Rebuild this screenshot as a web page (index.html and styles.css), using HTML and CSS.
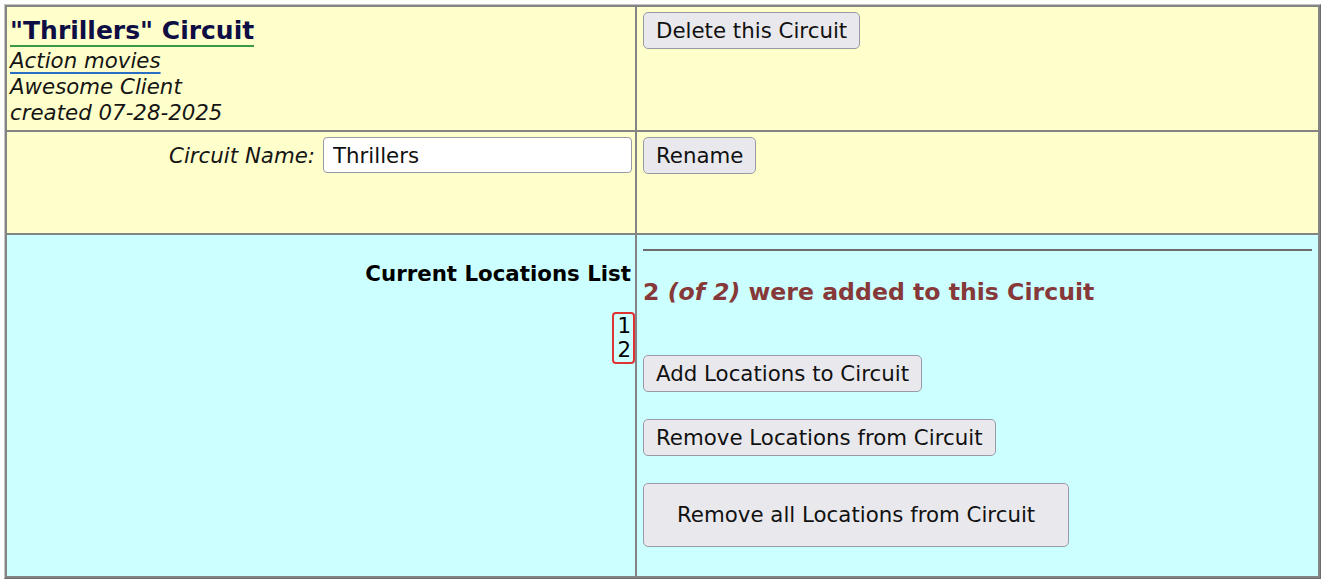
FILE: index.html
```html
<!DOCTYPE html>
<html lang="en">
<head>
<meta charset="utf-8">
<title>"Thrillers" Circuit</title>
<link rel="stylesheet" href="styles.css">
</head>
<body>
<div class="board">
  <div class="cell yellow info">
    <h3 class="title">"Thrillers" Circuit</h3>
    <div class="meta"><span class="category">Action movies</span></div>
    <div class="meta">Awesome Client</div>
    <div class="meta">created 07-28-2025</div>
  </div>
  <div class="cell yellow actions">
    <button class="btn">Delete this Circuit</button>
  </div>
  <div class="cell yellow rename-form">
    <label class="field-label" for="cname">Circuit Name:</label>
    <input class="field" id="cname" type="text" value="Thrillers">
  </div>
  <div class="cell yellow actions">
    <button class="btn">Rename</button>
  </div>
  <div class="cell cyan locations">
    <div class="list-title">Current Locations List</div>
    <div class="list-box">
      <div>1</div>
      <div>2</div>
    </div>
  </div>
  <div class="cell cyan manage">
    <hr class="rule">
    <h3 class="status">2 <em>(of 2)</em> were added to this Circuit</h3>
    <button class="btn btn-add">Add Locations to Circuit</button>
    <button class="btn btn-remove">Remove Locations from Circuit</button>
    <button class="btn btn-big">Remove all Locations from Circuit</button>
  </div>
</div>
</body>
</html>
```
FILE: styles.css
```css
html, body {
  margin: 0;
  padding: 0;
  background: #ffffff;
}
body {
  padding: 4px;
  font-family: "DejaVu Sans", Verdana, sans-serif;
  font-size: 21.33px;
  line-height: 26px;
  color: #111111;
}
.board {
  display: grid;
  grid-template-columns: 628px 681px;
  grid-template-rows: 123px 101px 341px;
  gap: 2px;
  padding: 2px;
  width: max-content;
  background: #848484;
  border: 1px solid;
  border-color: #c4c4c4 #6c6c6c #6c6c6c #c4c4c4;
}
.cell {
  min-width: 0;
}
.yellow { background: #ffffcc; }
.cyan { background: #ccffff; }

.info {
  padding: 0 3px;
}
.title {
  display: block;
  width: fit-content;
  margin: 9px 0 1px 0;
  font-size: 25px;
  line-height: 29px;
  font-weight: bold;
  color: #0e0e45;
  border-bottom: 2px solid #3b9b45;
}
.meta {
  font-style: italic;
  color: #151515;
}
.category {
  text-decoration: underline;
  text-decoration-color: #2a6ec4;
  text-decoration-thickness: 2px;
  text-underline-offset: 3.5px;
}

.actions {
  padding: 5px 6px;
}
.btn {
  font-family: "DejaVu Sans", Verdana, sans-serif;
  font-size: 21.33px;
  line-height: 25px;
  color: #111111;
  background: #e9e9ed;
  border: 1px solid #9a9aa6;
  border-radius: 5px;
  padding: 5px 12px;
  margin: 0;
  cursor: default;
}

.rename-form {
  display: flex;
  justify-content: flex-end;
  align-items: flex-start;
  gap: 8px;
  padding: 5px 3px 0 3px;
}
.field-label {
  font-style: italic;
  line-height: 38px;
  color: #151515;
}
.field {
  box-sizing: border-box;
  width: 309px;
  height: 36px;
  padding: 0 9px;
  font-family: "DejaVu Sans", Verdana, sans-serif;
  font-size: 21.33px;
  color: #111111;
  background: #ffffff;
  border: 1px solid #9a9aa6;
  border-radius: 4px;
  margin: 0;
}

.locations {
  display: flex;
  flex-direction: column;
  align-items: flex-end;
  padding: 26px 4px 0 3px;
}
.list-title {
  font-weight: bold;
  color: #000000;
}
.list-box {
  margin-top: 25px;
  margin-right: -4px;
  padding: 0 2px 0 3px;
  line-height: 24px;
  text-align: right;
  border: 2px solid #e03232;
  border-radius: 4px;
  color: #000000;
}

.manage {
  display: flex;
  flex-direction: column;
  align-items: flex-start;
  padding: 0 6px;
}
.rule {
  align-self: stretch;
  margin: 14px 0 0 0;
  height: 0;
  border: 0;
  border-top: 2px solid #6c6c6c;
}
.status {
  margin: 27px 0 0 0;
  font-size: 23.6px;
  line-height: 28px;
  font-weight: bold;
  color: #873838;
}
.btn-add {
  margin-top: 49px;
}
.btn-remove {
  margin-top: 27px;
}
.btn-big {
  margin-top: 27px;
  padding: 18px 33px 19px 33px;
}
```
